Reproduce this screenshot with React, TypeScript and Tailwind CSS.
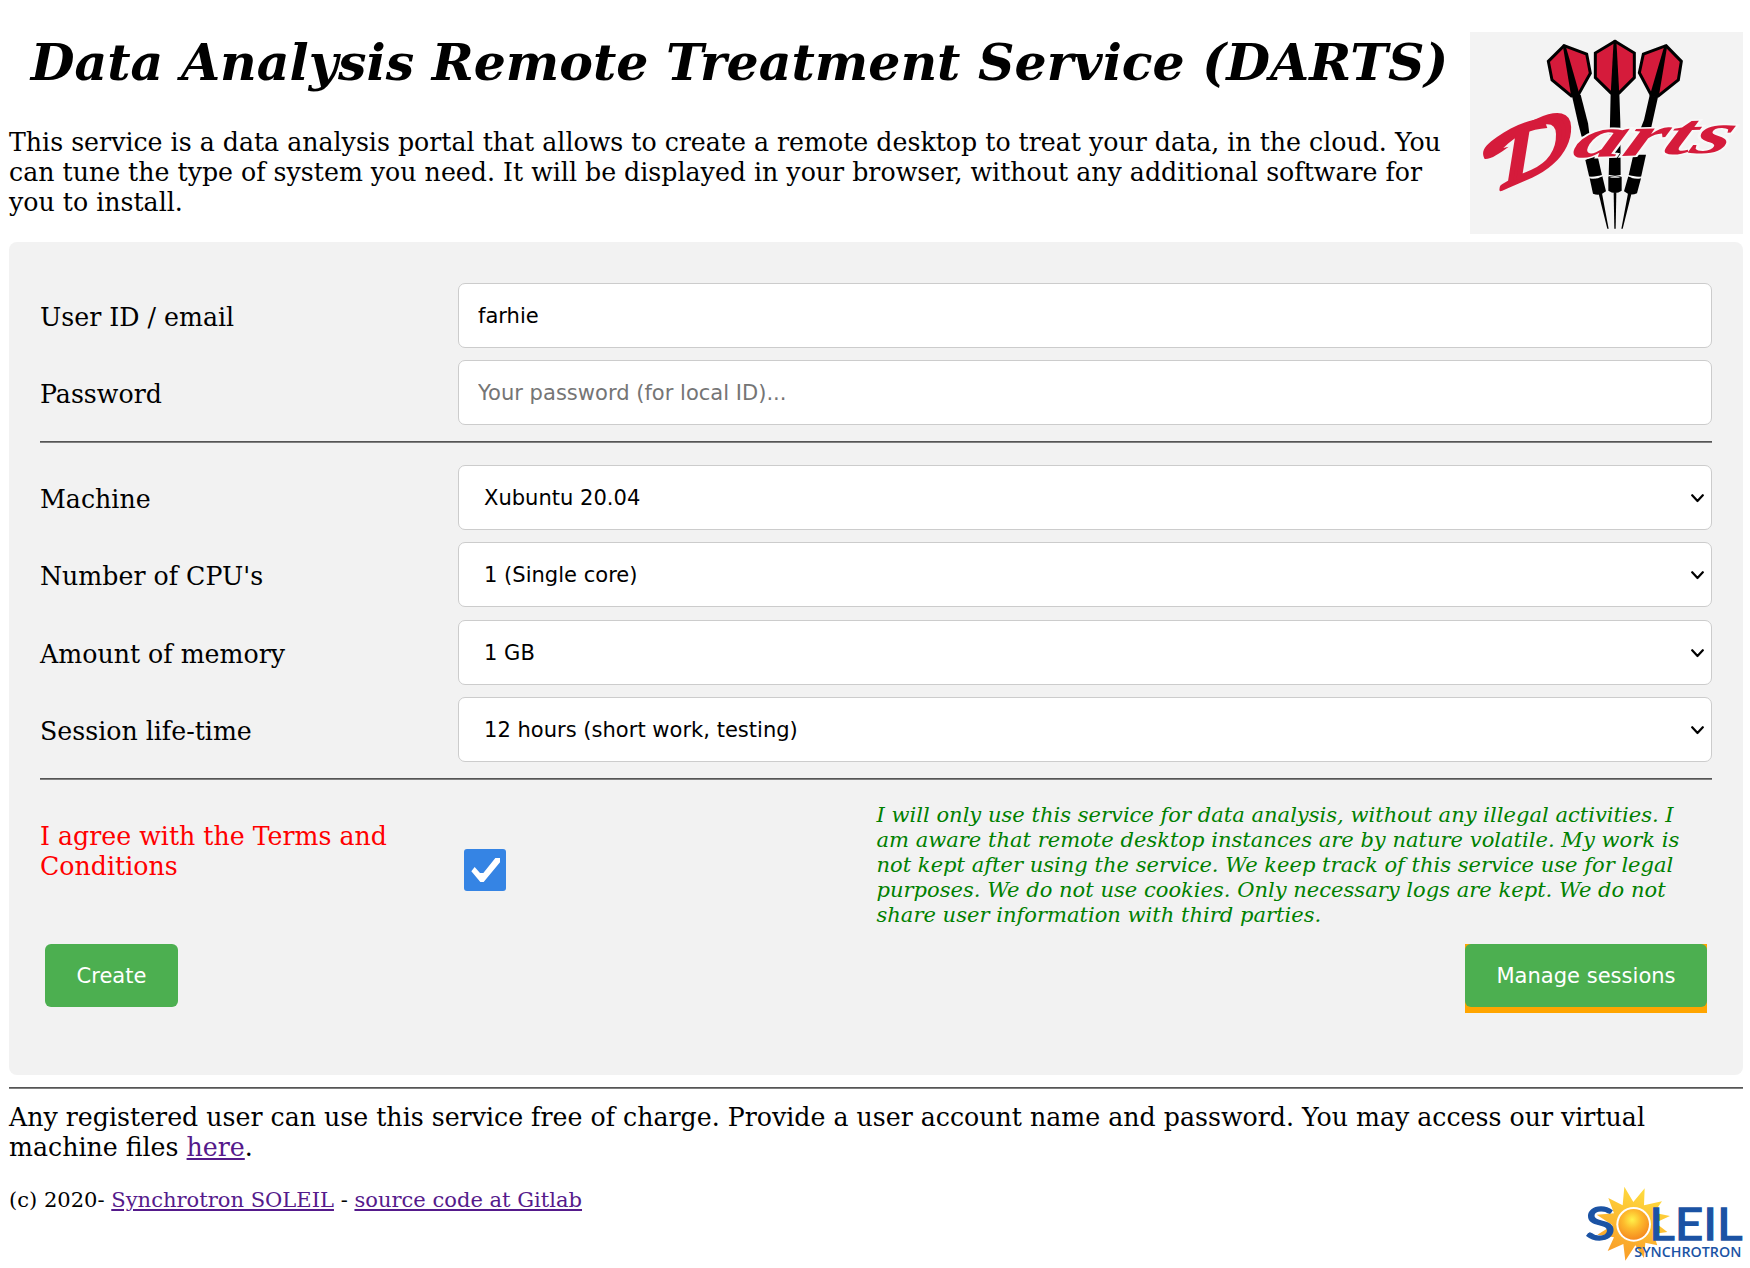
import { useState } from "react";

const serif = "font-['DejaVu_Serif']";
const sans = "font-['DejaVu_Sans']";

function Flight({ points, spine }: { points: string; spine: string }) {
  return (
    <g>
      <polygon points={points} fill="#d51b3b" stroke="#000" strokeWidth="9" strokeLinejoin="miter" />
      <polygon points={spine} fill="#000" />
    </g>
  );
}

function DartsLogo() {
  return (
    <svg className="h-[202px] w-[273px] bg-[#f3f3f3]" viewBox="30 36 819 606" preserveAspectRatio="none" role="img" aria-label="Darts">
      <Flight points="312,77 380,102 391,160 355,224 334,228 276,180 265,124" spine="308,74 316,74 360,228 334,232" />
      <Flight points="465,64 523,99 523,173 478,218 452,218 406,173 406,99" spine="461,60 469,60 478,224 452,224" />
      <Flight points="618,77 664,124 655,180 595,228 573,224 538,158 550,102" spine="614,74 622,76 596,232 569,228" />
      <g fill="#000">
        <polygon points="336,228 362,224 384,310 389,348 365,350 355,312" />
        <polygon points="452,218 478,218 481,308 482,470 446,470 450,308" />
        <polygon points="569,226 594,231 576,312 572,330 540,330 552,300" />
        <polygon points="376,420 412,404 426,466 388,472" />
        <polygon points="520,404 558,404 543,472 506,466" />
        <path d="M389 475Q408 480 427 469L438 514Q420 530 399 521Z" />
        <path d="M445 470Q465 477 485 470V512Q465 526 445 512Z" />
        <path d="M505 469Q524 480 543 475L531 520Q510 530 492 514Z" />
        <polygon points="416,522 426,520 446,626 442,626" />
        <polygon points="461,518 469,518 467,626 463,626" />
        <polygon points="504,520 514,523 488,626 484,626" />
      </g>
      <g fill="none" stroke="#fff" strokeWidth="3">
        <path d="M387 471Q408 477 427 467" />
        <path d="M445 466Q465 472 485 466" />
        <path d="M504 467Q524 477 545 471" />
      </g>
      <path d="M74 417C62 395 72 377 112 350C150 325 195 302 250 293L262 324C210 328 165 347 130 384L146 380C118 400 94 418 74 417Z" fill="#d51b3b" />
      <g fill="#d51b3b" fontFamily="Liberation Serif" fontStyle="italic" fontWeight="bold">
        <text transform="translate(130 504) rotate(-24) skewX(-22)" fontSize="218" fontWeight="normal" textLength="222" lengthAdjust="spacingAndGlyphs" stroke="#d51b3b" strokeWidth="13" strokeLinejoin="round">D</text>
        <text transform="translate(328 413) rotate(-2) skewX(-26)" fontSize="172" textLength="474" lengthAdjust="spacingAndGlyphs" stroke="#f8f8f8" strokeWidth="10" paintOrder="stroke">arts</text>
      </g>
    </svg>
  );
}

function SoleilLogo() {
  return (
    <svg className="-mr-px h-[76px] w-[158px] overflow-visible" viewBox="48 34 474 228" role="img" aria-label="Soleil Synchrotron">
      <defs>
        <radialGradient id="sun" cx="0.45" cy="0.35" r="0.65">
          <stop offset="0" stopColor="#fff14a" />
          <stop offset="0.45" stopColor="#fdbb2d" />
          <stop offset="1" stopColor="#f58a1f" />
        </radialGradient>
        <linearGradient id="rays" x1="0.7" y1="0" x2="0.3" y2="1">
          <stop offset="0" stopColor="#ffdf3f" />
          <stop offset="1" stopColor="#f99a26" />
        </linearGradient>
      </defs>
      <polygon
        fill="url(#rays)"
        points="163,36 190,82 224,41 222,92 276,80 252,114 300,124 256,144 292,172 250,178 262,212 226,204 222,250 196,212 166,258 160,208 113,229 132,188 82,180 128,152 80,120 132,116 115,70 158,92"
      />
      <circle cx="191" cy="149" r="52" fill="#fff" />
      <circle cx="191" cy="149" r="46" fill="url(#sun)" />
      <g fill="#1b53a4" stroke="#1b53a4" strokeWidth="4" fontFamily="Lato">
        <text x="46" y="197" fontSize="138" textLength="90" lengthAdjust="spacingAndGlyphs">S</text>
        <text x="238" y="197" fontSize="136" textLength="279" lengthAdjust="spacingAndGlyphs">LEIL</text>
        <text x="193" y="248" fontSize="45" fontFamily="Open Sans" fontWeight="600" strokeWidth="0" textLength="321" lengthAdjust="spacingAndGlyphs">SYNCHROTRON</text>
      </g>
    </svg>
  );
}

const rule = "h-[2px] border-t border-b border-t-[#555] border-b-[#808080]";
const field =
  "h-[65px] w-[1254px] shrink-0 rounded-[7px] border border-[#ccc] bg-white text-[21.05px] text-black outline-none placeholder:text-[#757575] placeholder:opacity-100";

function Label({ text }: { text: string }) {
  return <label className="w-[418px] shrink-0 pt-[5px]">{text}</label>;
}

function SelectRow({ label, value }: { label: string; value: string }) {
  return (
    <div className="flex items-center nth-3:mt-px">
      <Label text={label} />
      <div className={`${field} ${sans} flex items-center justify-between pr-[7.5px] pl-[25px]`}>
        <span>{value}</span>
        <svg className="mt-[2px] h-[9px] w-[13px]" viewBox="0 0 13 9" fill="none" stroke="#000" strokeWidth="2.2" strokeLinecap="round" strokeLinejoin="round">
          <path d="M1.2 1.2 6.5 7 11.8 1.2" />
        </svg>
      </div>
    </div>
  );
}

const machineOptions = [
  { label: "Machine", value: "Xubuntu 20.04" },
  { label: "Number of CPU's", value: "1 (Single core)" },
  { label: "Amount of memory", value: "1 GB" },
  { label: "Session life-time", value: "12 hours (short work, testing)" },
];

const link = "text-[#551a8b] underline";
const button = `${sans} h-[63px] rounded-[6px] bg-[#4caf50] text-[21.05px] text-white`;

export default function App() {
  const [user, setUser] = useState("farhie");
  const [agreed, setAgreed] = useState(true);
  return (
    <main className={`${serif} h-[1268px] w-[1750px] overflow-hidden bg-white pl-[9px] text-[25.26px] leading-[30px] text-black`}>
      <header className="flex h-[242px] w-[1734px] items-start justify-between">
        <div className="w-[1461px] pt-[33px]">
          <h1 className="text-center text-[50.53px] leading-[60px] font-bold whitespace-nowrap italic">
            Data Analysis Remote Treatment Service (DARTS)
          </h1>
          <p className="mt-[35px] whitespace-nowrap">
            This service is a data analysis portal that allows to create a remote desktop to treat your data, in the cloud. You
            <br />
            can tune the type of system you need. It will be displayed in your browser, without any additional software for
            <br />
            you to install.
          </p>
        </div>
        <div className="pt-[32px]">
          <DartsLogo />
        </div>
      </header>

      <section className="h-[833px] w-[1734px] rounded-[8px] bg-[#f2f2f2] px-[31px] pt-[41px]">
        <div className="flex flex-col gap-[12px]">
          <div className="flex items-center">
            <Label text="User ID / email" />
            <input className={`${field} ${sans} px-[19px]`} value={user} onChange={(e) => setUser(e.target.value)} />
          </div>
          <div className="flex items-center">
            <Label text="Password" />
            <input type="password" className={`${field} ${sans} px-[19px]`} placeholder="Your password (for local ID)..." />
          </div>
        </div>
        <div className={`${rule} mt-[16px] mb-[22px]`} />
        <div className="flex flex-col gap-[12px]">
          {machineOptions.map((o) => (
            <SelectRow key={o.label} {...o} />
          ))}
        </div>
        <div className={`${rule} mt-[16px]`} />
        <div className="flex h-[164px] items-start">
          <p className="w-[424px] pt-[42px] text-[#f00]">
            I agree with the Terms and
            <br />
            Conditions
          </p>
          <button className="mt-[69px] h-[42px] w-[42px] rounded-[3px] bg-[#3584e4]" onClick={() => setAgreed(!agreed)} aria-label="Agree">
            {agreed && (
              <svg viewBox="72 87 126 126" className="h-[42px] w-[42px]" fill="#fff">
                <path d="M94 154 104 141 120 159H130L166 114H180V127L131 186H121Z" />
              </svg>
            )}
          </button>
          <p className="ml-[370.5px] pt-[22px] text-[21.05px] leading-[25px] whitespace-nowrap text-[#008000] italic">
            I will only use this service for data analysis, without any illegal activities. I
            <br />
            am aware that remote desktop instances are by nature volatile. My work is
            <br />
            not kept after using the service. We keep track of this service use for legal
            <br />
            purposes. We do not use cookies. Only necessary logs are kept. We do not
            <br />
            share user information with third parties.
          </p>
        </div>
        <div className="flex items-start justify-between px-[5px]">
          <button className={`${button} w-[133px]`}>Create</button>
          <div className="h-[69px] bg-[#ffa500]">
            <button className={`${button} block w-[242px]`}>Manage sessions</button>
          </div>
        </div>
      </section>

      <div className={`${rule} mt-[12px] w-[1734px]`} />
      <p className="mt-[14px] whitespace-nowrap">
        Any registered user can use this service free of charge. Provide a user account name and password. You may access our virtual
        <br />
        machine files <a className={link} href="#files">here</a>.
      </p>
      <footer className="flex w-[1734px] items-start justify-between">
        <p className="pt-[24px] text-[21.05px] leading-[25px]">
          (c) 2020- <a className={link} href="#soleil">Synchrotron SOLEIL</a> - <a className={link} href="#source">source code at Gitlab</a>
        </p>
        <div className="pt-[23px]">
          <SoleilLogo />
        </div>
      </footer>
    </main>
  );
}
